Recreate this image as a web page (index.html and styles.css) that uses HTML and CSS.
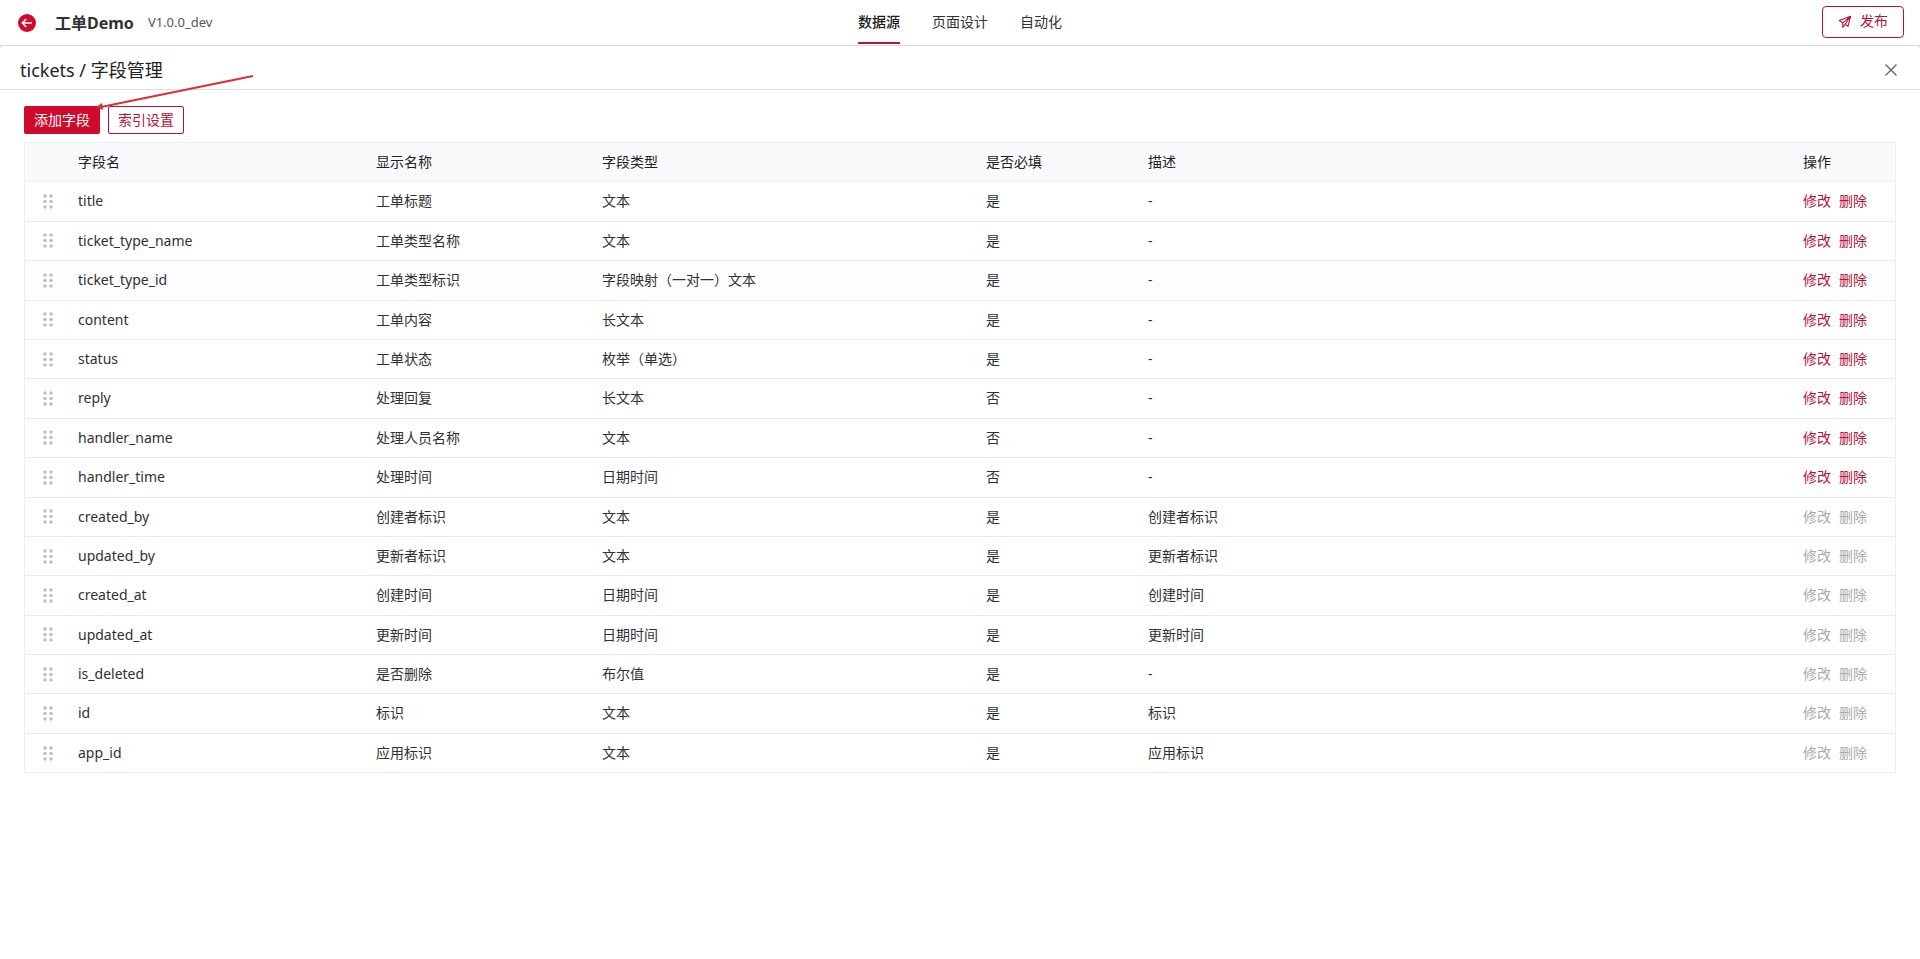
FILE: index.html
```html
<!DOCTYPE html>
<html lang="zh-CN">
<head>
<meta charset="utf-8">
<title>工单Demo - 字段管理</title>
<link rel="stylesheet" href="styles.css">
</head>
<body>
<svg class="sprite" aria-hidden="true">
  <symbol id="drag" viewBox="0 0 10 15">
    <circle cx="2" cy="2" r="1.8"/><circle cx="8" cy="2" r="1.8"/>
    <circle cx="2" cy="7.5" r="1.8"/><circle cx="8" cy="7.5" r="1.8"/>
    <circle cx="2" cy="13" r="1.8"/><circle cx="8" cy="13" r="1.8"/>
  </symbol>
</svg>
<header class="topbar">
  <div class="brand">
    <button class="icon-button" type="button" aria-label="返回">
      <svg width="18" height="18" viewBox="0 0 18 18"><circle cx="9" cy="9" r="9" fill="#cf0a2c"/><path d="M14 9H4.5M8.3 5L4.3 9l4 4" fill="none" stroke="#fff" stroke-width="1.6"/></svg>
    </button>
    <h1 class="app-name">工单Demo</h1>
    <span class="version">V1.0.0_dev</span>
  </div>
  <nav class="tabs">
    <a class="tab active" href="#data">数据源</a>
    <a class="tab" href="#pages">页面设计</a>
    <a class="tab" href="#automation">自动化</a>
  </nav>
  <div class="actions">
    <button class="publish" type="button">
      <svg width="14" height="14" viewBox="0 0 14 14" fill="none" stroke="currentColor" stroke-width="1.1" stroke-linejoin="round"><path d="M12.600 1.300L1.200 5.600l3.600 2.200zM12.600 1.300L10 11.300 7 9.200M12.600 1.300L4.800 7.800v4.600L7 9.200z"/></svg>
      <span>发布</span>
    </button>
  </div>
</header>
<main class="backdrop">
  <section class="panel">
    <div class="panel-head">
      <h2 class="panel-title">tickets / 字段管理</h2>
      <button class="icon-button close" type="button" aria-label="关闭">
        <svg width="12" height="12" viewBox="0 0 12 12"><path d="M.5.5l11 11M11.5.5l-11 11" fill="none" stroke="#666" stroke-width="1.4"/></svg>
      </button>
    </div>
    <div class="panel-body">
      <div class="toolbar">
        <button class="btn primary" type="button">添加字段</button>
        <button class="btn" type="button">索引设置</button>
        <svg class="pointer" width="160" height="36" viewBox="0 0 160 36" aria-hidden="true"><path d="M157 2L5 33" stroke="#dc2f35" stroke-width="2" fill="none"/><path d="M0 33l6-4 1 7z" fill="#dc2f35"/></svg>
      </div>
      <table class="fields">
        <colgroup><col class="c-drag"><col class="c-name"><col class="c-label"><col class="c-type"><col class="c-required"><col><col class="c-ops"></colgroup>
        <thead><tr><th></th><th>字段名</th><th>显示名称</th><th>字段类型</th><th>是否必填</th><th>描述</th><th>操作</th></tr></thead>
        <tbody id="rows"></tbody>
      </table>
    </div>
  </section>
</main>
<script src="fields.js"></script>
</body>
</html>
```
FILE: styles.css
```css
* { box-sizing: border-box; }
body {
  margin: 0;
  min-height: 100vh;
  display: flex;
  flex-direction: column;
  background: #fff;
  color: #303133;
  font: 14px/1.6 "Noto Sans", "Noto Sans CJK SC", sans-serif;
}
button { font: inherit; cursor: pointer; }
.sprite { display: none; }
h1, h2 { margin: 0; }

.topbar {
  display: grid;
  grid-template-columns: 1fr auto 1fr;
  align-items: center;
  height: 45px;
  padding: 0 16px;
}
.brand { display: flex; align-items: center; padding-left: 2px; }
.icon-button { display: flex; padding: 0; border: 0; background: none; }
.app-name { margin-left: 19px; font-size: 16px; line-height: 24px; }
.version { margin-left: 14px; font-size: 13px; color: #555; }
.tabs { display: flex; gap: 32px; align-self: stretch; }
.tab {
  display: flex;
  align-items: center;
  height: 44px;
  padding-top: 2px;
  border-bottom: 2px solid transparent;
  color: #303133;
  text-decoration: none;
}
.tab.active { border-color: #b5123c; color: #191919; font-weight: 500; }
.actions { display: flex; justify-content: flex-end; padding-bottom: 2px; }
.publish {
  display: flex;
  align-items: center;
  gap: 8px;
  height: 32px;
  padding: 0 15px;
  border: 1px solid #b5123c;
  border-radius: 4px;
  background: #fff;
  color: #b5123c;
}

.backdrop { flex: 1; display: flex; background: #dcdcdc; }
.panel {
  flex: 1;
  border-top: 1px solid #dcdcdc;
  border-radius: 4px 4px 0 0;
  background: #fff;
}
.panel-head {
  display: flex;
  align-items: center;
  justify-content: space-between;
  height: 44px;
  padding: 4px 23px 0 20px;
  border-bottom: 1px solid #dfdfdf;
}
.panel-title { font-size: 18px; font-weight: 400; line-height: 28px; color: #222; }
.panel-body { padding: 16px 24px; }
.toolbar { position: relative; display: flex; gap: 8px; margin-bottom: 8px; }
.btn {
  height: 28px;
  padding: 0 9px;
  border: 1px solid #b5123c;
  border-radius: 2px;
  background: #fff;
  color: #b5123c;
  line-height: 26px;
}
.btn.primary { border-color: #cf0a2c; background: #cf0a2c; color: #fff; }
.pointer { position: absolute; left: 72px; top: -32px; pointer-events: none; }

.fields {
  width: 100%;
  table-layout: fixed;
  border-collapse: separate;
  border-spacing: 0;
  border: 1px solid #ebeef5;
  border-bottom: 0;
}
.c-drag { width: 45px; }
.c-name { width: 298px; }
.c-label { width: 226px; }
.c-type { width: 384px; }
.c-required { width: 162px; }
.c-ops { width: 100px; }
th, td { padding: 8px; border-bottom: 1px solid #ebecef; text-align: left; }
th { background: #fafafc; color: #202124; font-weight: 400; }
.hovered td { background: #fdfdfd; }
.handle { padding-left: 18px; }
.handle svg { display: block; fill: #c0c0c0; }
.ops { display: flex; gap: 8px; }
.link { padding: 0; border: 0; background: none; color: #b5123c; line-height: inherit; }
.link:disabled { color: #aaa; cursor: default; }
```
FILE: fields.js
```js
const fields = [
  ["title", "工单标题", "文本", "是", "-"],
  ["ticket_type_name", "工单类型名称", "文本", "是", "-"],
  ["ticket_type_id", "工单类型标识", "字段映射（一对一）文本", "是", "-"],
  ["content", "工单内容", "长文本", "是", "-"],
  ["status", "工单状态", "枚举（单选）", "是", "-"],
  ["reply", "处理回复", "长文本", "否", "-"],
  ["handler_name", "处理人员名称", "文本", "否", "-"],
  ["handler_time", "处理时间", "日期时间", "否", "-"],
  ["created_by", "创建者标识", "文本", "是", "创建者标识"],
  ["updated_by", "更新者标识", "文本", "是", "更新者标识"],
  ["created_at", "创建时间", "日期时间", "是", "创建时间"],
  ["updated_at", "更新时间", "日期时间", "是", "更新时间"],
  ["is_deleted", "是否删除", "布尔值", "是", "-"],
  ["id", "标识", "文本", "是", "标识"],
  ["app_id", "应用标识", "文本", "是", "应用标识"]
];
const customCount = 8;

document.getElementById("rows").innerHTML = fields.map((field, i) => {
  const off = i < customCount ? "" : " disabled";
  return `<tr${i === 2 ? ' class="hovered"' : ""}>
    <td class="handle"><svg width="10" height="15"><use href="#drag"/></svg></td>
    ${field.map(text => `<td>${text}</td>`).join("")}
    <td><div class="ops"><button class="link" type="button"${off}>修改</button><button class="link" type="button"${off}>删除</button></div></td>
  </tr>`;
}).join("");
```
